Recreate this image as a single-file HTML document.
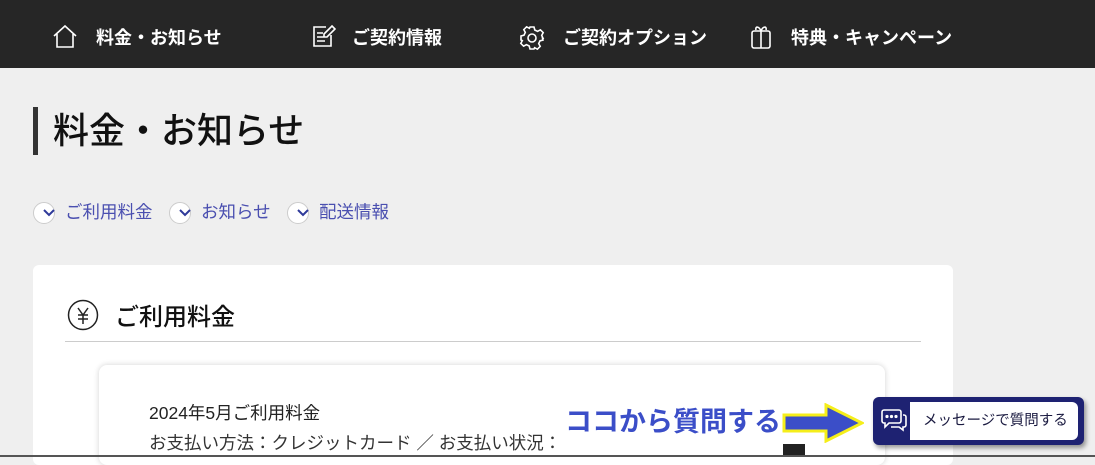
<!DOCTYPE html>
<html><head><meta charset="utf-8"><style>
*{margin:0;padding:0;box-sizing:border-box}
body{width:1095px;height:457px;overflow:hidden;background:#efefef;font-family:"Liberation Sans","Noto Sans CJK JP",sans-serif;position:relative}
.nav{position:absolute;left:0;top:0;width:1095px;height:68px;background:#262626;color:#fff}
.nav .it{position:absolute;top:26px;font-size:18px;font-weight:bold;line-height:24px}
.nav svg{position:absolute;top:24px}
h1{position:absolute;left:33px;top:107px;height:48px;border-left:5px solid #333;padding-left:15px;font-size:36px;font-weight:500;line-height:48px;color:#111}
.links{position:absolute;top:200px;left:33px;font-size:17.5px;color:#4a4fb0;line-height:24px}
.lk{position:absolute;top:0;white-space:nowrap}
.lk i{position:absolute;left:0;top:2px;width:22px;height:22px;border-radius:50%;background:#fff;border:1px solid #ccc}
.card{position:absolute;left:33px;top:265px;width:920px;height:200px;background:#fff;border-radius:6px}
.inner{position:absolute;left:99px;top:365px;width:786px;height:100px;background:#fff;border-radius:8px;box-shadow:0 0 6px rgba(0,0,0,.18)}
</style></head><body>
<div class="nav">
<svg style="left:52px" width="26" height="26" viewBox="0 0 26 26" fill="none" stroke="#fff" stroke-width="1.6"><path d="M2 12L13 2l11 10M5 10v13h16V10"/></svg>
<div class="it" style="left:96px">料金・お知らせ</div>
<svg style="left:312px" width="24" height="24" viewBox="0 0 24 24" fill="none" stroke="#fff" stroke-width="1.6"><path d="M14 3H2v19h17V11M5 9h6M5 13h8M5 17h8M20 2l3 3-8 8h-3v-3z"/></svg>
<div class="it" style="left:352px">ご契約情報</div>
<svg style="left:519px;top:25px" width="26" height="26" viewBox="0 0 26 26" fill="none" stroke="#fff" stroke-width="1.6"><circle cx="13" cy="13" r="4"/><path d="M11 2h4l.8 3 2.8 1.3 2.8-1.5 2.8 2.8-1.5 2.8L24 13.2l-.5 0 0 0L24 15l-3 .8-1.3 2.8 1.5 2.8-2.8 2.8-2.8-1.5L15 24h-4l-.8-3-2.8-1.3-2.8 1.5-2.8-2.8 1.5-2.8L2 15v-4l3-.8 1.3-2.8-1.5-2.8 2.8-2.8 2.8 1.5z"/></svg>
<div class="it" style="left:563px">ご契約オプション</div>
<svg style="left:750px" width="22" height="26" viewBox="0 0 22 26" fill="none" stroke="#fff" stroke-width="1.6"><rect x="2" y="7" width="18" height="17" rx="2"/><path d="M11 7v17M11 7C9 2 5 2 6 6M11 7c2-5 6-5 5-1"/></svg>
<div class="it" style="left:791px">特典・キャンペーン</div>
</div>
<h1>料金・お知らせ</h1>
<div class="links">
<div class="lk" style="left:0"><i></i><span style="margin-left:32px">ご利用料金</span></div>
<div class="lk" style="left:136px"><i></i><span style="margin-left:32px">お知らせ</span></div>
<div class="lk" style="left:254px"><i></i><span style="margin-left:32px">配送情報</span></div>
</div>
<svg style="position:absolute;left:38px;top:207px" width="300" height="12"><g fill="none" stroke="#2f3a9a" stroke-width="2"><path d="M6 3l5 5 5-5"/><path d="M142 3l5 5 5-5"/><path d="M260 3l5 5 5-5"/></g></svg>
<div class="card">
<svg style="position:absolute;left:34px;top:34px" width="32" height="32" viewBox="0 0 32 32" fill="none" stroke="#222" stroke-width="1.5"><circle cx="16" cy="16" r="14.5"/><path d="M11 9l5 7 5-7M16 16v9M11 16h10M11 20h10"/></svg>
<div style="position:absolute;left:82px;top:32px;font-size:24px;font-weight:500;color:#111">ご利用料金</div>
<div style="position:absolute;left:32px;top:76px;width:856px;height:1px;background:#ccc"></div>
</div>
<div class="inner">
<div style="position:absolute;left:50px;top:35px;font-size:17.5px;color:#222">2024年5月ご利用料金</div>
<div style="position:absolute;left:50px;top:65px;font-size:17.5px;color:#333;white-space:nowrap">お支払い方法：クレジットカード ／ お支払い状況：</div>
</div>
<div style="position:absolute;left:564px;top:400px;width:220px;height:57px;background:#fff"></div>
<div style="position:absolute;left:565px;top:400px;font-size:27px;font-weight:bold;color:#3b4ec8;white-space:nowrap">ココから質問する</div>
<svg style="position:absolute;left:782px;top:403px" width="82" height="40" viewBox="0 0 82 40"><path d="M2 12h42V2l36 18-36 18V28H2z" fill="#3b4ec8" stroke="#f5ee1a" stroke-width="3"/></svg>
<div style="position:absolute;left:783px;top:444px;width:22px;height:13px;background:#222"></div>
<div style="position:absolute;left:0;top:455px;width:1095px;height:2px;background:#555"></div>
<div style="position:absolute;left:873px;top:397px;width:211px;height:48px;background:#1e2272;border-radius:6px;box-shadow:2px 3px 5px rgba(0,0,0,.4)"></div>
<div style="position:absolute;left:910px;top:402px;width:168px;height:38px;background:#fff;border-radius:0 6px 6px 0;font-size:14.5px;line-height:38px;color:#1a1a40;padding-left:13px;white-space:nowrap">メッセージで質問する</div>
<svg style="position:absolute;left:881px;top:408px" width="26" height="24" viewBox="0 0 26 24" fill="none" stroke="#fff" stroke-width="1.6"><path d="M3 2h15a2 2 0 012 2v9a2 2 0 01-2 2H8l-4 4v-4H3a2 2 0 01-2-2V4a2 2 0 012-2z"/><path d="M22 7h1a2 2 0 012 2v8a2 2 0 01-2 2h-1v3l-4-3H10"/><circle cx="6" cy="8.5" r=".8" fill="#fff"/><circle cx="10.5" cy="8.5" r=".8" fill="#fff"/><circle cx="15" cy="8.5" r=".8" fill="#fff"/></svg>
</body></html>
